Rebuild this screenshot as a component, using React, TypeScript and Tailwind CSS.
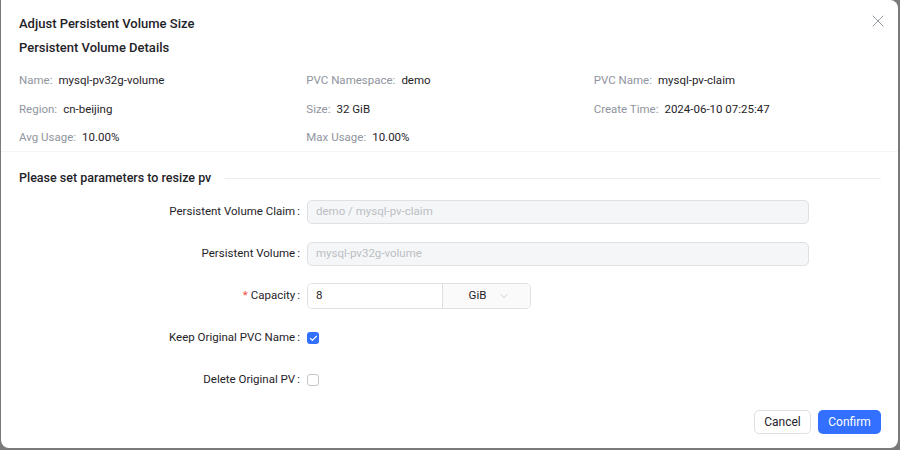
import React, { useState } from 'react';
import { X, ChevronDown, Check } from 'lucide-react';

const details: [string, string][] = [
  ['Name', 'mysql-pv32g-volume'],
  ['PVC Namespace', 'demo'],
  ['PVC Name', 'mysql-pv-claim'],
  ['Region', 'cn-beijing'],
  ['Size', '32 GiB'],
  ['Create Time', '2024-06-10 07:25:47'],
  ['Avg Usage', '10.00%'],
  ['Max Usage', '10.00%'],
];

const FormRow: React.FC<{ label: string; required?: boolean; children: React.ReactNode }> = ({
  label,
  required,
  children,
}) => (
  <div className="flex items-center h-[42px]">
    <div className="w-[288px] shrink-0 pr-[7px] text-right text-[11.5px] text-[#1f2329]">
      {required && <span className="text-[#f54a45] mr-[3px]">*</span>}
      {label}
      <span className="ml-[2px]">:</span>
    </div>
    <div className="flex-1">{children}</div>
  </div>
);

const Box: React.FC<{ checked: boolean; onClick: () => void }> = ({ checked, onClick }) => (
  <button
    onClick={onClick}
    className={`w-[12px] h-[12px] rounded-[3px] flex items-center justify-center ${
      checked ? 'bg-[#3370ff]' : 'border border-[#c4c7cc] bg-white'
    }`}
  >
    {checked && <Check className="w-[9px] h-[9px] text-white" strokeWidth={3} />}
  </button>
);

const App: React.FC = () => {
  const [keepName, setKeepName] = useState(true);
  const [deletePv, setDeletePv] = useState(false);

  return (
    <div className="w-[900px] h-[450px] bg-[#7a7a7a] overflow-hidden" style={{ fontFamily: 'Roboto, "Noto Sans", sans-serif' }}>
      <div className="ml-[1px] w-[897px] h-[448px] bg-white rounded-b-lg rounded-tr-lg flex flex-col">
        {/* header */}
        <div className="relative px-[18px] pt-[14px]">
          <h2 className="text-[13px] font-medium text-[#1f2329] leading-[20px]">Adjust Persistent Volume Size</h2>
          <button className="absolute right-[10px] top-[11px] text-[#8f959e]">
            <X className="w-[20px] h-[20px]" strokeWidth={1.1} />
          </button>
        </div>

        <div className="px-[18px]">
          <h3 className="mt-[4px] text-[13px] font-medium text-[#1f2329] leading-[20px]">Persistent Volume Details</h3>
          <div className="grid grid-cols-3 w-[862px] mt-[12px] gap-y-[8.5px]">
            {details.map(([k, v]) => (
              <div key={k} className="text-[11.5px] leading-[20px]">
                <span className="text-[#8f959e]">{k}</span>
                <span className="text-[#8f959e] mr-[6px]">:</span>
                <span className="text-[#1f2329]">{v}</span>
              </div>
            ))}
            <div />
          </div>
        </div>

        <div className="mt-[4px] h-px bg-[#f4f5f6]" />

        <div className="px-[18px] mt-[16px]">
          <div className="flex items-center gap-[14px] w-[862px]">
            <span className="text-[12.5px] font-medium text-[#1f2329] leading-[20px]">Please set parameters to resize pv</span>
            <div className="flex-1 h-px bg-[#ebedf0]" />
          </div>

          <div className="mt-[3px]">
            <FormRow label="Persistent Volume Claim">
              <div className="w-[502px] h-[24px] rounded-[5px] border border-[#dee0e3] bg-[#f5f6f7] px-[8px] flex items-center text-[11.5px] text-[#bbbfc4]">
                demo / mysql-pv-claim
              </div>
            </FormRow>
            <FormRow label="Persistent Volume">
              <div className="w-[502px] h-[24px] rounded-[5px] border border-[#dee0e3] bg-[#f5f6f7] px-[8px] flex items-center text-[11.5px] text-[#bbbfc4]">
                mysql-pv32g-volume
              </div>
            </FormRow>
            <FormRow label="Capacity" required>
              <div className="flex w-[224px] h-[26px] rounded-[5px] border border-[#dee0e3] overflow-hidden">
                <div className="w-[134px] px-[8px] flex items-center text-[11.5px] text-[#1f2329] bg-white">8</div>
                <div className="flex-1 border-l border-[#dee0e3] bg-[#fafafa] flex items-center justify-center gap-[12px] text-[11.5px] text-[#1f2329] pl-[6px]">
                  GiB
                  <ChevronDown className="w-[12px] h-[12px] text-[#bbbfc4]" strokeWidth={1.5} />
                </div>
              </div>
            </FormRow>
            <FormRow label="Keep Original PVC Name">
              <Box checked={keepName} onClick={() => setKeepName(!keepName)} />
            </FormRow>
            <FormRow label="Delete Original PV">
              <Box checked={deletePv} onClick={() => setDeletePv(!deletePv)} />
            </FormRow>
          </div>
        </div>

        <div className="mt-auto mb-[14px] pr-[17px] flex justify-end gap-[7px]">
          <button className="h-[24px] w-[57px] rounded-[5px] border border-[#dee0e3] bg-white text-[12px] text-[#1f2329]">
            Cancel
          </button>
          <button className="h-[24px] w-[63px] rounded-[5px] bg-[#3370ff] text-[12px] text-white">
            Confirm
          </button>
        </div>
      </div>
    </div>
  );
};

export default App;
